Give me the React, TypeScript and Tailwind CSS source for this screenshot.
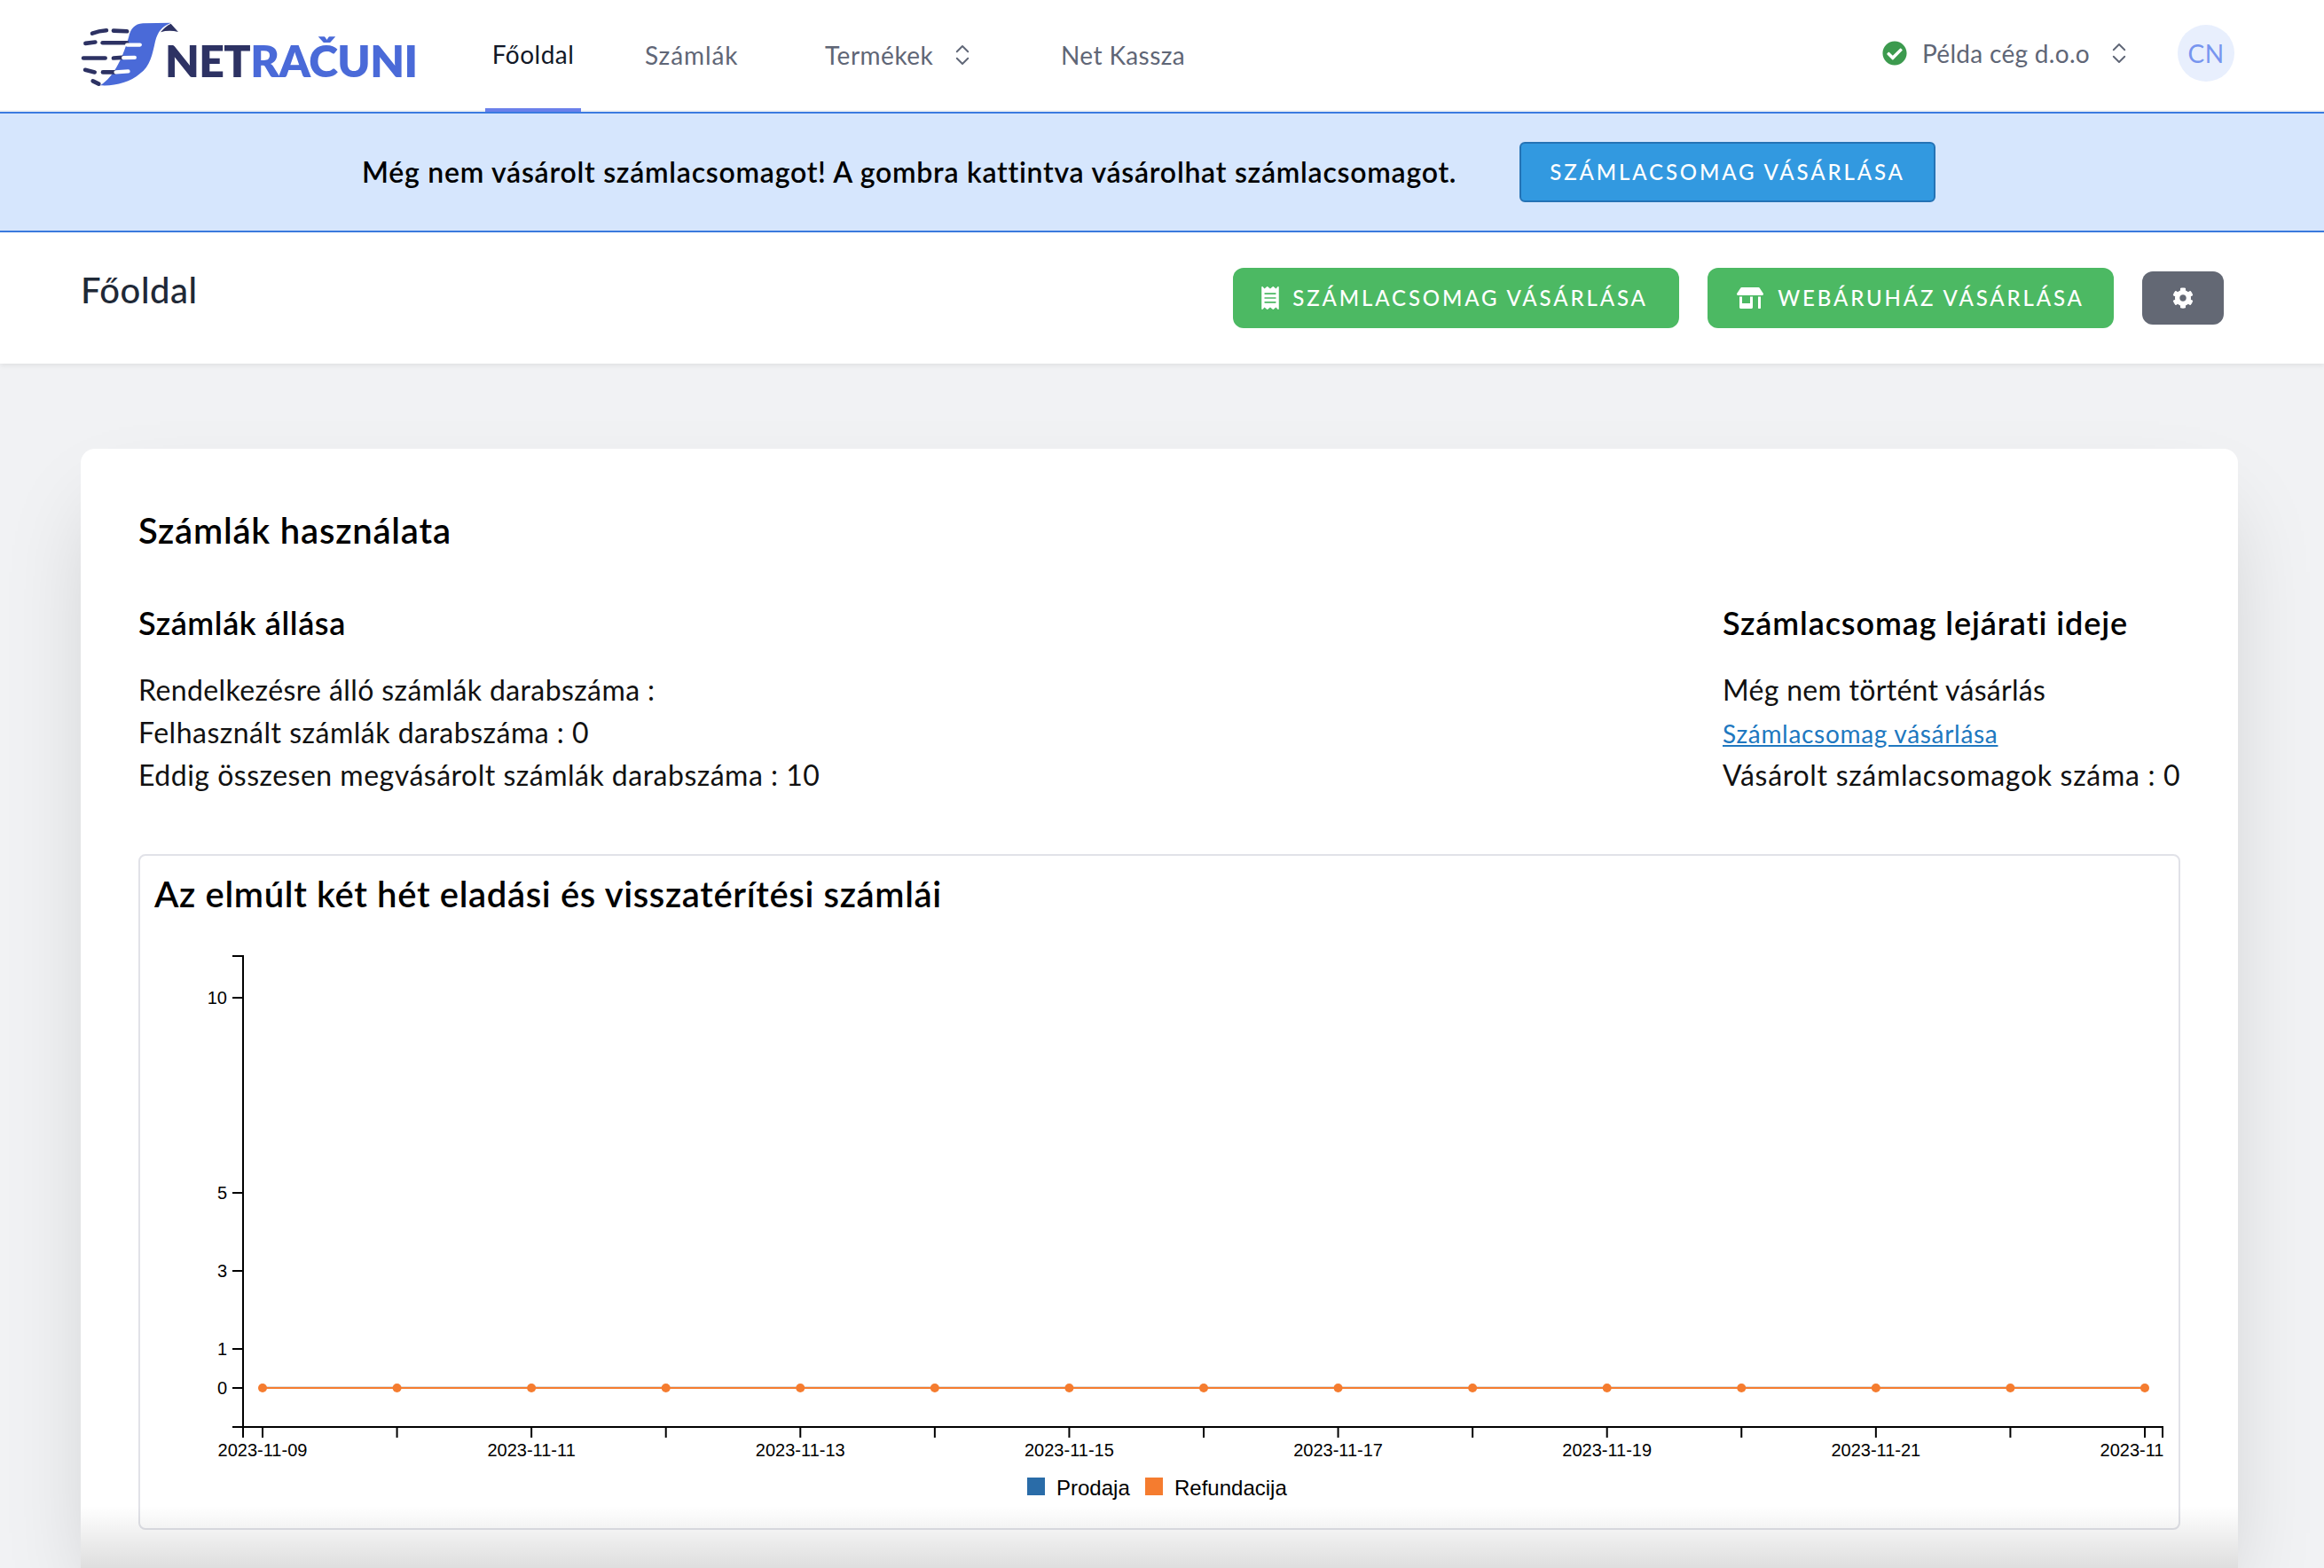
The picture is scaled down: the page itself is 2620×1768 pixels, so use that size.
import { ChevronsUpDown } from 'lucide-react'
import { FaCheckCircle, FaCog, FaReceipt, FaStoreAlt } from 'react-icons/fa'

const pointXs = Array.from({ length: 15 }, (_, i) => 296 + i * 151.57)
const dates = ['09', '11', '13', '15', '17', '19', '21', '23']
const yTicks = [
  { label: '10', y: 1125 },
  { label: '5', y: 1345 },
  { label: '3', y: 1433 },
  { label: '1', y: 1521 },
  { label: '0', y: 1565 },
]

function Logo() {
  const dark = [
    'M128 78 Q150 70 176 68',
    'M200 69 L246 71',
    'M105 112 L138 108',
    'M163 110 L246 110',
    'M98 162 L172 162',
    'M200 162 L230 160',
    'M104 202 L136 210',
    'M164 210 L204 210',
    'M130 240 L150 250',
  ]
  const light = ['M246 117 L290 117', 'M234 161 L272 160', 'M208 210 L250 207']
  return (
    <svg viewBox="90 40 335 220" className="w-[112px] h-[73px] shrink-0 -mt-[4px]">
      <path
        d="M155 255 C205 225 235 150 252 90 C258 62 272 46 300 44 L395 42 C365 55 350 72 342 105 C332 150 325 190 290 215 C255 245 205 258 155 255 Z"
        fill="#4a6ad8"
      />
      <path d="M395 45 L420 73 Q388 66 360 74 Q375 55 395 45 Z" fill="#2d3263" />
      {dark.map(d => (
        <path key={d} d={d} stroke="#2d3263" strokeWidth="14" strokeLinecap="round" fill="none" />
      ))}
      {light.map(d => (
        <path key={d} d={d} stroke="#ffffff" strokeWidth="13" strokeLinecap="round" fill="none" />
      ))}
    </svg>
  )
}

function Chart() {
  return (
    <svg viewBox="158 1050 2298 673" className="w-[2298px] h-[673px] block">
      <defs>
        <clipPath id="chart-clip">
          <rect x="158" y="1050" width="2282" height="673" />
        </clipPath>
      </defs>
      <path d="M262 1078 H274 V1609 H262 M274 1609 H2438 V1621 M274 1609 V1621" stroke="#000" strokeWidth="2" fill="none" />
      {yTicks.map(t => (
        <g key={t.label}>
          <path d={`M262 ${t.y} H274`} stroke="#000" strokeWidth="2" />
          <text x="256" y={t.y + 7} textAnchor="end" fontSize="20" fontFamily="Liberation Sans" fill="#000">
            {t.label}
          </text>
        </g>
      ))}
      <path d="M296 1564 H2418" stroke="#dddddd" strokeWidth="2" />
      <path d="M296 1565 H2418" stroke="#f57c2f" strokeWidth="2" />
      {pointXs.map(x => (
        <g key={x}>
          <circle cx={x} cy="1565" r="5" fill="#f57c2f" />
          <path d={`M${x} 1609 V1621`} stroke="#000" strokeWidth="2" />
        </g>
      ))}
      <g clipPath="url(#chart-clip)">
        {dates.map((d, i) => (
          <text
            key={d}
            x={pointXs[i * 2]}
            y="1642"
            textAnchor="middle"
            fontSize="20"
            fontFamily="Liberation Sans"
            fill="#000"
          >
            2023-11-{d}
          </text>
        ))}
      </g>
      <rect x="1158" y="1666" width="20" height="20" fill="#2a6ca8" />
      <text x="1191" y="1686" fontSize="24" fontFamily="Liberation Sans" fill="#000">
        Prodaja
      </text>
      <rect x="1291" y="1666" width="20" height="20" fill="#f57c2f" />
      <text x="1324" y="1686" fontSize="24" fontFamily="Liberation Sans" fill="#000">
        Refundacija
      </text>
    </svg>
  )
}

function NavBar() {
  return (
    <header className="h-[126px] shrink-0 bg-white flex items-center pl-[91px] tracking-[0.5px] shadow-[inset_0_-2px_0_#f1f2f4]">
      <div className="w-[456px] flex items-center">
        <Logo />
        <span className="-ml-[17px] mt-[10px] text-[50px] leading-none font-extrabold tracking-[-0.6px] text-[#2d3263]">
          NET<span className="text-[#4a6ad8]">RAČUNI</span>
        </span>
      </div>
      <a className="w-[108px] self-stretch flex items-center justify-center border-b-[4px] border-[#6a80ea] text-[28px] text-[#111827]">
        Főoldal
      </a>
      <a className="ml-[72px] mb-[2px] w-[203px] text-[28px] tracking-[0.9px] text-[#5f6676]">Számlák</a>
      <a className="w-[266px] mb-[3px] flex items-center text-[28px] text-[#5f6676]">
        Termékek
        <ChevronsUpDown size={30} strokeWidth={1.5} className="ml-[18px]" />
      </a>
      <a className="w-[926px] mb-[2px] text-[28px] tracking-[0.4px] text-[#5f6676]">Net Kassza</a>
      <div className="w-[333px] mb-[6px] flex items-center text-[28px] tracking-[0.3px] text-[#5f6676]">
        <FaCheckCircle className="text-[28px] text-[#3c9a4e] mr-[17px]" />
        Példa cég d.o.o
        <ChevronsUpDown size={30} strokeWidth={1.5} className="ml-[18px]" />
      </div>
      <div className="w-[64px] h-[64px] mb-[6px] rounded-full bg-[#e8effd] flex items-center justify-center text-[28px] text-[#7795ef]">
        CN
      </div>
    </header>
  )
}

function Banner() {
  return (
    <div className="h-[136px] shrink-0 bg-[#d6e6fd] border-y-2 border-[#3b7be0] flex items-center pl-[408px]">
      <p className="w-[1305px] text-[32px] font-semibold tracking-[0.75px] text-black">
        Még nem vásárolt számlacsomagot! A gombra kattintva vásárolhat számlacsomagot.
      </p>
      <button className="w-[469px] h-[68px] rounded-[6px] bg-[#3299e0] border-2 border-[#2573b5] text-white text-[24px] tracking-[0.12em] font-medium uppercase">
        Számlacsomag vásárlása
      </button>
    </div>
  )
}

function PageHeader() {
  return (
    <div className="h-[148px] shrink-0 bg-white flex justify-between items-center pl-[91px] pr-[113px] shadow-[0_2px_6px_rgba(0,0,0,0.08)] relative">
      <h1 className="self-start mt-[35px] text-[40px] leading-[60px] font-medium tracking-[0.5px] text-[#1f2937]">Főoldal</h1>
      <div className="flex items-center gap-[32px]">
        <button className="w-[503px] h-[68px] pr-[6px] rounded-[12px] bg-[#4cb963] text-white text-[24px] tracking-[0.12em] font-medium uppercase flex items-center justify-center gap-[12px]">
          <FaReceipt className="text-[26px]" />
          Számlacsomag vásárlása
        </button>
        <button className="w-[458px] h-[68px] rounded-[12px] bg-[#4cb963] text-white text-[24px] tracking-[0.12em] font-medium uppercase flex items-center justify-center gap-[16px]">
          <FaStoreAlt className="text-[30px]" />
          Webáruház vásárlása
        </button>
        <button className="w-[92px] h-[60px] rounded-[12px] bg-[#636874] text-white flex items-center justify-center">
          <FaCog className="text-[24px]" />
        </button>
      </div>
    </div>
  )
}

function UsageCard() {
  return (
    <section className="relative flex-1 min-h-0 ml-[91px] mr-[97px] mt-[96px] rounded-t-[16px] bg-white px-[65px] pt-[62px] shadow-[0_50px_100px_-24px_rgba(0,0,0,0.18)]">
      <h2 className="text-[40px] leading-[60px] font-semibold tracking-[0.8px] text-black">Számlák használata</h2>
      <div className="mt-[47px] flex justify-between text-[32px] leading-[48px] tracking-[0.5px] text-[#111]">
        <div>
          <h3 className="text-[36px] leading-[54px] font-semibold tracking-[0.6px] text-black mb-[25px]">Számlák állása</h3>
          <p className="tracking-[0.4px]">Rendelkezésre álló számlák darabszáma :</p>
          <p>Felhasznált számlák darabszáma : 0</p>
          <p>Eddig összesen megvásárolt számlák darabszáma : 10</p>
        </div>
        <div className="w-[516px] whitespace-nowrap">
          <h3 className="text-[36px] leading-[54px] font-semibold tracking-[0.9px] text-black mb-[25px]">Számlacsomag lejárati ideje</h3>
          <p className="tracking-[0.3px]">Még nem történt vásárlás</p>
          <p className="h-[48px] pt-[2px] flex items-center">
            <a className="text-[28px] leading-[48px] tracking-[0.7px] text-[#2078c0] underline">Számlacsomag vásárlása</a>
          </p>
          <p className="tracking-[0.7px]">Vásárolt számlacsomagok száma : 0</p>
        </div>
      </div>
      <div className="mt-[65px] h-[762px] rounded-[8px] border-2 border-[#e1e2e8]">
        <h4 className="pl-[16px] h-[85px] flex items-center text-[40px] font-semibold tracking-[0.65px] text-black">
          Az elmúlt két hét eladási és visszatérítési számlái
        </h4>
        <Chart />
      </div>
      <div className="absolute inset-x-0 bottom-0 h-[70px] bg-gradient-to-t from-black/[0.13] to-transparent pointer-events-none" />
    </section>
  )
}

export default function App() {
  return (
    <div className="h-[1768px] overflow-hidden bg-[#f1f2f4] flex flex-col font-['Lato','Noto_Sans',sans-serif]">
      <NavBar />
      <Banner />
      <PageHeader />
      <UsageCard />
    </div>
  )
}
